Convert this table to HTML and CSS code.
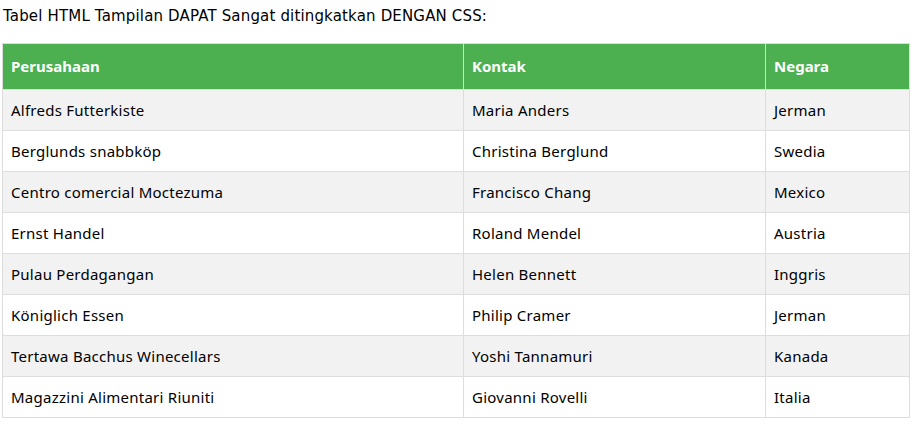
FILE: index.html
```html
<!DOCTYPE html>
<html lang="id">
<head>
<meta charset="utf-8">
<title>Tabel</title>
<link rel="stylesheet" href="styles.css">
</head>
<body>
<p class="intro">Tabel HTML Tampilan DAPAT Sangat ditingkatkan DENGAN CSS:</p>
<table class="customers">
  <colgroup><col class="c1"><col class="c2"><col class="c3"></colgroup>
  <thead>
    <tr><th>Perusahaan</th><th>Kontak</th><th>Negara</th></tr>
  </thead>
  <tbody>
    <tr><td>Alfreds Futterkiste</td><td>Maria Anders</td><td>Jerman</td></tr>
    <tr><td>Berglunds snabbköp</td><td>Christina Berglund</td><td>Swedia</td></tr>
    <tr><td>Centro comercial Moctezuma</td><td>Francisco Chang</td><td>Mexico</td></tr>
    <tr><td>Ernst Handel</td><td>Roland Mendel</td><td>Austria</td></tr>
    <tr><td>Pulau Perdagangan</td><td>Helen Bennett</td><td>Inggris</td></tr>
    <tr><td>Königlich Essen</td><td>Philip Cramer</td><td>Jerman</td></tr>
    <tr><td>Tertawa Bacchus Winecellars</td><td>Yoshi Tannamuri</td><td>Kanada</td></tr>
    <tr><td>Magazzini Alimentari Riuniti</td><td>Giovanni Rovelli</td><td>Italia</td></tr>
  </tbody>
</table>
</body>
</html>
```
FILE: styles.css
```css
html, body {
  margin: 0;
  padding: 0;
  background: #fff;
}
body {
  padding: 0 4px 0 2px;
  color: #000;
}
.intro {
  margin: 0;
  padding: 6px 0 0 1px;
  height: 43px;
  box-sizing: border-box;
  font-family: "DejaVu Sans", Verdana, sans-serif;
  font-size: 15px;
  letter-spacing: 0.16px;
  line-height: 20px;
  color: #000;
}
.customers {
  border-collapse: collapse;
  table-layout: fixed;
  width: 907px;
  font-family: "Noto Sans", "Trebuchet MS", sans-serif;
  font-size: 15px;
  color: #000;
}
.c1 { width: 461px; }
.c2 { width: 302px; }
.c3 { width: 144px; }
.customers th,
.customers td {
  border: 1px solid #ddd;
  text-align: left;
  padding: 0 8px;
  vertical-align: middle;
}
.customers th {
  background: #4caf50;
  color: #fff;
  font-weight: bold;
  height: 46px;
  padding-bottom: 2px;
  box-sizing: border-box;
}
.customers td {
  height: 40px;
  letter-spacing: 0.25px;
}
.customers tbody tr:nth-child(odd) td {
  background: #f2f2f2;
}
```
